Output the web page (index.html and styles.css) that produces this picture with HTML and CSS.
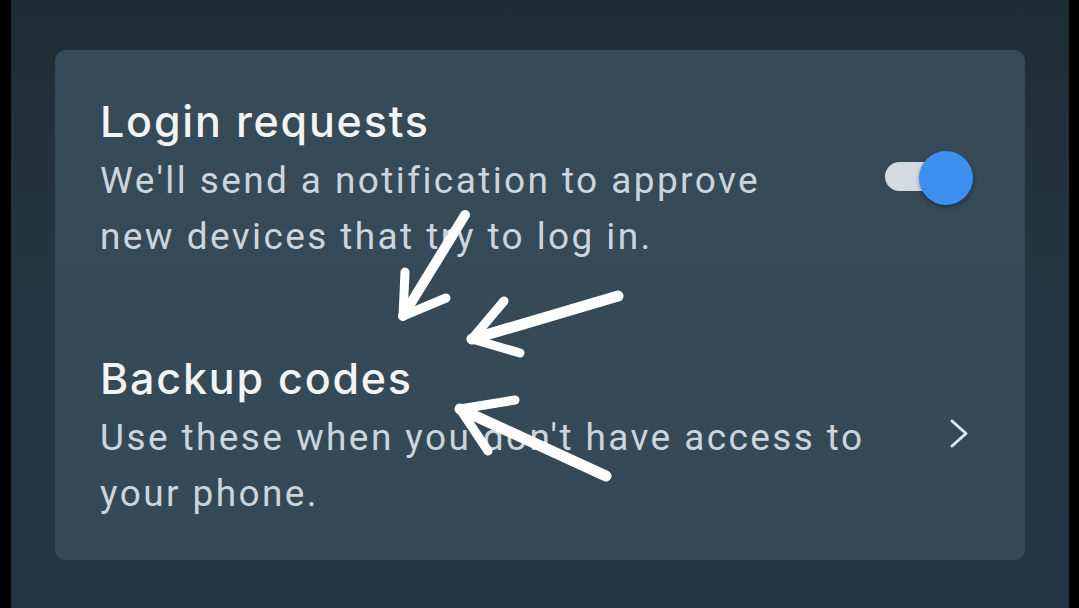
FILE: index.html
```html
<!DOCTYPE html>
<html lang="en">
<head>
<meta charset="utf-8">
<title>Security settings</title>
<link rel="stylesheet" href="styles.css">
</head>
<body>
<div class="frame">
  <div class="edge edge-left"></div>
  <main class="screen">
    <section class="card">
      <div class="row">
        <div class="text">
          <h2 class="title">Login requests</h2>
          <p class="desc desc-narrow">We'll send a notification to approve new devices that try to log in.</p>
        </div>
        <div class="toggle" role="switch" aria-checked="true">
          <span class="track"></span>
          <span class="thumb"></span>
        </div>
      </div>
      <div class="row row-second">
        <div class="text">
          <h2 class="title">Backup codes</h2>
          <p class="desc desc-wide">Use these when you don't have access to your phone.</p>
        </div>
        <svg class="chevron" width="20" height="31" viewBox="0 0 20 31">
          <path d="M3 3 L17 15.5 L3 28" fill="none" stroke="#dfe5ea" stroke-width="3" stroke-linecap="round" stroke-linejoin="round"/>
        </svg>
      </div>
    </section>
  </main>
  <div class="edge edge-right"></div>
  <svg class="arrows" width="1079" height="608" viewBox="0 0 1079 608">
    <g fill="none" stroke="#ffffff" stroke-linecap="round" stroke-linejoin="round">
      <path d="M465 215 L403 316" stroke-width="10"/>
      <path d="M403 316 L405 272" stroke-width="9"/>
      <path d="M403 316 L446 298" stroke-width="9"/>
      <path d="M618 296 L472 339" stroke-width="11"/>
      <path d="M472 339 L504 301" stroke-width="9"/>
      <path d="M472 339 L520 353" stroke-width="9"/>
      <path d="M460 409 L606 476" stroke-width="11"/>
      <path d="M460 409 L515 400" stroke-width="9"/>
      <path d="M460 409 L488 451" stroke-width="9"/>
    </g>
  </svg>
</div>
</body>
</html>
```

FILE: styles.css
```css
* { box-sizing: border-box; }

html, body {
  margin: 0;
  padding: 0;
  background: #000;
}

.frame {
  position: relative;
  display: flex;
  width: 1079px;
  height: 608px;
  overflow: hidden;
}

.edge {
  background: #000;
  flex: 0 0 auto;
}
.edge-left { width: 11px; }
.edge-right { width: 10px; }

.screen {
  flex: 1;
  background: linear-gradient(180deg, #1e2c35 0%, #24343f 40%, #233545 100%);
  padding: 50px 44px 48px 44px;
}

.card {
  height: 510px;
  background: linear-gradient(180deg, #364a57 0%, #344856 100%);
  border-radius: 11px;
  padding: 47px 52px 30px 45px;
  display: flex;
  flex-direction: column;
  gap: 90px;
}

.row {
  display: flex;
  align-items: center;
  justify-content: space-between;
}

.text {
  flex: 0 0 auto;
}

.title {
  margin: 0 0 8px 0;
  font-family: "Inter", "Open Sans", sans-serif;
  font-weight: 500;
  font-size: 43px;
  line-height: 48px;
  letter-spacing: 1.8px;
  color: #f1f3f5;
}

.desc {
  margin: 0;
  font-family: "Roboto", "Liberation Sans", sans-serif;
  font-size: 37px;
  line-height: 55.5px;
  letter-spacing: 2.4px;
  color: #ccd5dd;
}
.desc-narrow { width: 720px; }
.desc-wide { width: 800px; }

.toggle {
  position: relative;
  width: 88px;
  height: 56px;
  margin-top: -6px;
}
.track {
  position: absolute;
  left: 0;
  top: 12px;
  width: 70px;
  height: 29px;
  border-radius: 15px;
  background: #d3dae1;
}
.thumb {
  position: absolute;
  right: 0;
  top: 1px;
  width: 54px;
  height: 54px;
  border-radius: 50%;
  background: #3d8ff0;
  box-shadow: 0 2px 4px rgba(0, 0, 0, 0.35);
}

.chevron {
  margin-right: 4px;
  margin-top: -8px;
}

.arrows {
  position: absolute;
  left: 0;
  top: 0;
  pointer-events: none;
}
```
